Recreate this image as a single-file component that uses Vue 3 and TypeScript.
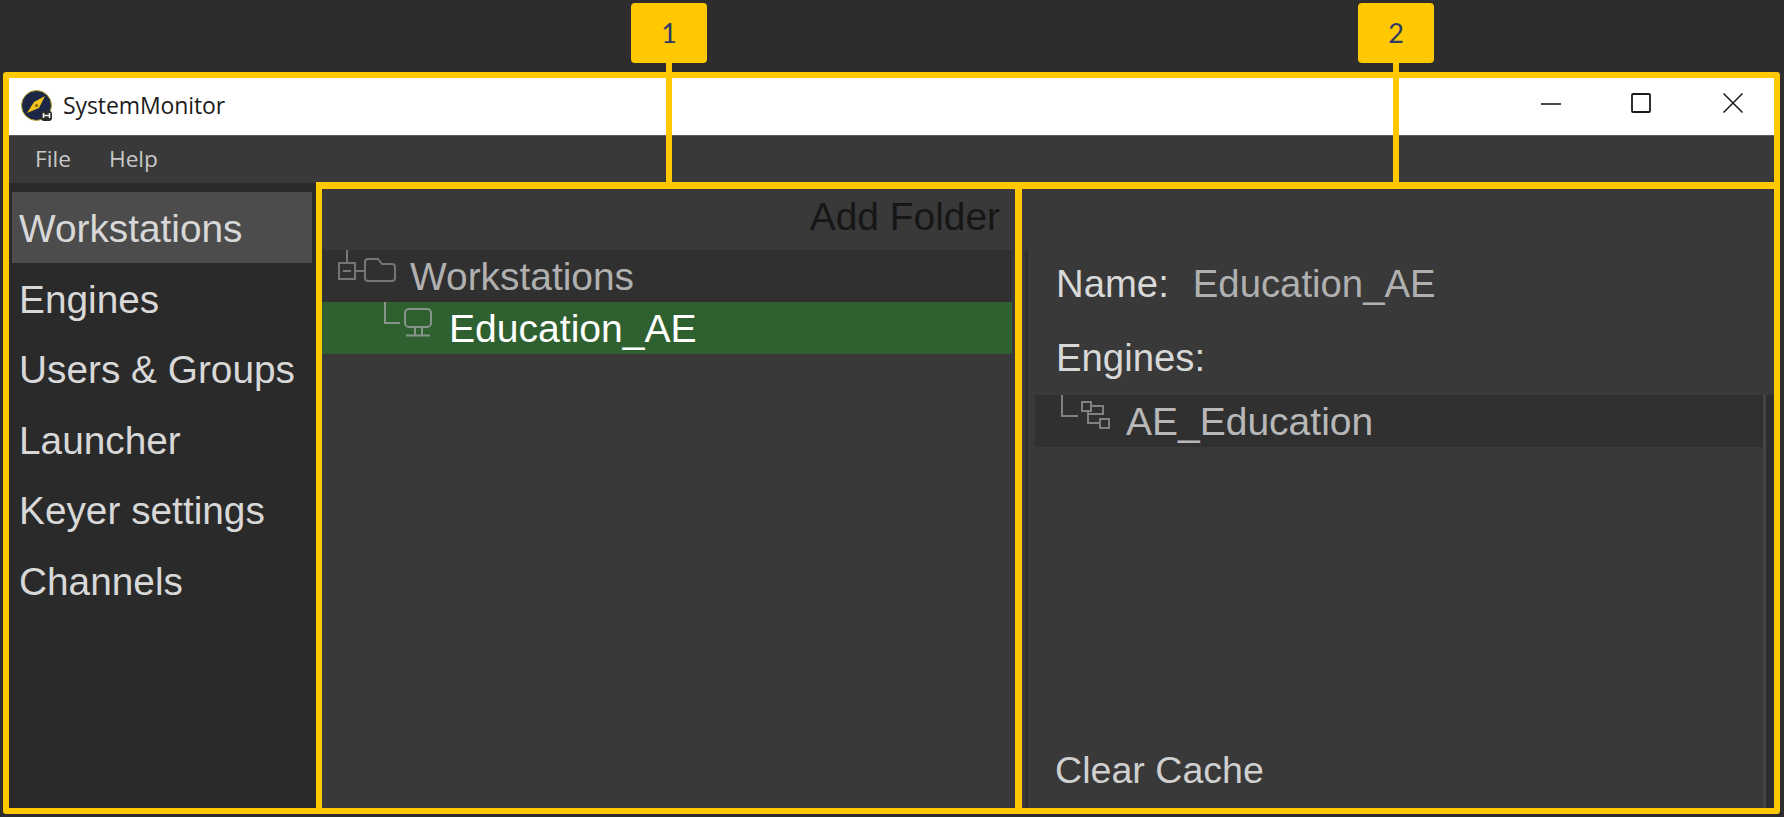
<template>
  <div class="page">
    <div v-for="c in callouts" :key="c.label" class="callout" :style="{ left: c.left + 'px' }">{{ c.label }}</div>

    <div class="window">
      <header class="titlebar">
        <svg class="logo" width="32" height="32" viewBox="0 0 32 32">
          <circle cx="15.5" cy="15.5" r="15" fill="#1c2748" stroke="#b9a52c" stroke-width="1" />
          <path d="M6 23 L13 12 L24 6 L18 18 Z" fill="#f2c31b" />
          <circle cx="15.5" cy="15.5" r="1.6" fill="#8a6d10" />
          <rect x="20" y="21" width="11" height="10" rx="3" fill="#2b2b2b" />
          <path d="M22.5 23 v5 M28.5 23 v5 M22.5 25.5 h6" stroke="#f1f1f1" stroke-width="1.6" fill="none" />
        </svg>
        <span class="titlebar__name">SystemMonitor</span>
        <div class="titlebar__controls">
          <svg width="20" height="20" viewBox="0 0 20 20"><path d="M0 11 H20" stroke="#1a1a1a" stroke-width="1.6" /></svg>
          <svg width="20" height="20" viewBox="0 0 20 20"><rect x="1" y="1" width="18" height="18" rx="1" fill="none" stroke="#1a1a1a" stroke-width="1.8" /></svg>
          <svg width="20" height="20" viewBox="0 0 20 20"><path d="M0.5 0.5 L19.5 19.5 M19.5 0.5 L0.5 19.5" stroke="#1a1a1a" stroke-width="1.5" /></svg>
        </div>
      </header>

      <nav class="menu">
        <span>File</span>
        <span>Help</span>
      </nav>

      <div class="body">
        <aside class="sidebar">
          <div v-for="(item, i) in navItems" :key="item" class="sidebar__item" :class="{ 'is-active': i === 0 }">{{ item }}</div>
        </aside>

        <section class="tree-panel">
          <div class="tree-panel__head">Add Folder</div>
          <div class="row row--root">
            <svg class="row__icon" width="58" height="52" viewBox="0 0 58 52" fill="none" stroke="#757575" stroke-width="2">
              <path d="M9 0 V12 M18 21 H26 M5 21 H13" />
              <rect x="1" y="13" width="16" height="16" />
              <path d="M27 12 Q27 9 30 9 H40 L44 14 H54 Q57 14 57 17 V28 Q57 31 54 31 H30 Q27 31 27 28 Z" />
            </svg>
            <span>Workstations</span>
          </div>
          <div class="row row--selected">
            <svg class="row__icon" width="48" height="52" viewBox="0 0 48 52" fill="none" stroke="#87948a" stroke-width="2">
              <path d="M1 0 V21 H16" />
              <rect x="21" y="7" width="26" height="18" rx="4" />
              <path d="M31 25 V33 M38 25 V33 M22 33.5 H46" />
            </svg>
            <span>Education_AE</span>
          </div>
        </section>

        <section class="detail">
          <div class="detail__inner">
            <div class="field">
              <span class="field__label">Name:</span>
              <span class="field__value">Education_AE</span>
            </div>
            <div class="field field--engines">Engines:</div>
            <div class="engines">
              <div class="engines__list">
                <div class="row row--engine">
                  <svg class="row__icon" width="50" height="52" viewBox="0 0 50 52" fill="none" stroke="#808080" stroke-width="2">
                    <path d="M1 0 V21 H17" />
                    <rect x="21" y="7" width="9" height="9" />
                    <rect x="39" y="24" width="9" height="9" />
                    <path d="M30 11 H42 V19 H27 V28 H39 M27 16 V19" />
                  </svg>
                  <span>AE_Education</span>
                </div>
                <div class="clear">Clear Cache</div>
              </div>
            </div>
          </div>
        </section>
      </div>
    </div>
  </div>
</template>

<script setup lang="ts">
interface Callout {
  label: string;
  left: number;
}

const callouts: Callout[] = [
  { label: '1', left: 631 },
  { label: '2', left: 1358 },
];

const navItems: string[] = ['Workstations', 'Engines', 'Users & Groups', 'Launcher', 'Keyer settings', 'Channels'];
</script>

<style>
html,body{margin:0;background:#2d2d2d}
</style>

<style scoped>
.page{position:relative;height:817px;box-sizing:border-box;padding:72px 4px 3px 3px;background:#2d2d2d;font-family:"Liberation Sans",Arial,sans-serif;overflow:hidden}
.callout{position:absolute;top:3px;width:76px;height:60px;border-radius:4px;background:#ffc800;color:#2b3a67;font:27px/60px Lato,"Open Sans",sans-serif;text-align:center;z-index:2}
.callout::after{content:"";position:absolute;left:35px;top:60px;width:6px;height:120px;background:#ffc800}
.window{display:flex;flex-direction:column;height:100%;box-sizing:border-box;border:6px solid #ffc800;border-radius:3px;background:#393939}
.titlebar{display:flex;align-items:center;height:57px;flex:none;box-sizing:border-box;background:#fff;padding:0 0 4px 12px}
.logo{margin-right:10px;flex:none;margin-top:3px}
.titlebar__name{font:23px "Open Sans",sans-serif;color:#1c1c1c;letter-spacing:-.1px}
.titlebar__controls{display:flex;gap:72px;margin-left:auto;padding-right:31px;margin-top:-3px}
.titlebar__controls svg:first-child{margin-right:-2px}
.menu{display:flex;gap:38px;align-items:center;height:47px;flex:none;box-sizing:border-box;border-top:1px solid #5a5a5a;padding:0 0 2px 26px;font:22.7px "Open Sans",sans-serif;color:#c8c8c8}
.body{display:flex;flex:1;min-height:0}
.sidebar{width:307px;flex:none;box-sizing:border-box;border-top:1px solid #393939;padding:9px 4px 9px 3px;background:#2a2a2a}
.sidebar__item{height:70.5px;line-height:73.5px;padding-left:7px;font-size:38.8px;color:#d8d8d8;white-space:nowrap}
.sidebar__item.is-active{background:#4c4c4c}
.tree-panel{width:706px;flex:none;box-sizing:border-box;border:solid #ffc800;border-width:7px 7px 0 6px;background:#393939}
.tree-panel__head{height:61px;line-height:56px;padding-right:15px;text-align:right;font-size:38.9px;color:#161616}
.row{display:flex;align-items:center;height:52px;font-size:38.9px;color:#b0b0b0;white-space:nowrap;margin-right:3px}
.row span{margin-top:2px}
.row--root{background:#303030;padding-left:16px}
.row--root span{margin-left:14px}
.row--selected{background:#2f6130;padding-left:62px;color:#fff}
.row--selected span{margin-left:17px;font-size:39.1px}
.row__icon{flex:none}
.detail{flex:1;display:flex;min-width:0;box-sizing:border-box;border-top:7px solid #ffc800;padding:61px 0 0 3px;background:#393939}
.detail__inner{flex:1;display:flex;flex-direction:column;min-width:0;border-left:3px solid #2f2f2f;padding-top:7px}
.field{display:flex;flex:none;height:52px;line-height:53px;padding-left:28px;font-size:38.3px;color:#d8d8d8}
.field__value{margin-left:24px;color:#b0b0b0}
.field--engines{margin-top:22px}
.engines{flex:1;display:flex;min-height:0;margin:12px 0 0 7px;border-right:8px solid #2e2e2e}
.engines__list{flex:1;display:flex;flex-direction:column;min-width:0;border-right:3px solid #444;padding-bottom:12px}
.row--engine{margin:0;padding-left:26px;background:#303030;color:#b8b8b8}
.row--engine span{margin-left:15px;font-size:39px}
.clear{margin-top:auto;padding-left:20px;height:52px;line-height:52px;font-size:37.6px;color:#d0d0d0}
</style>
